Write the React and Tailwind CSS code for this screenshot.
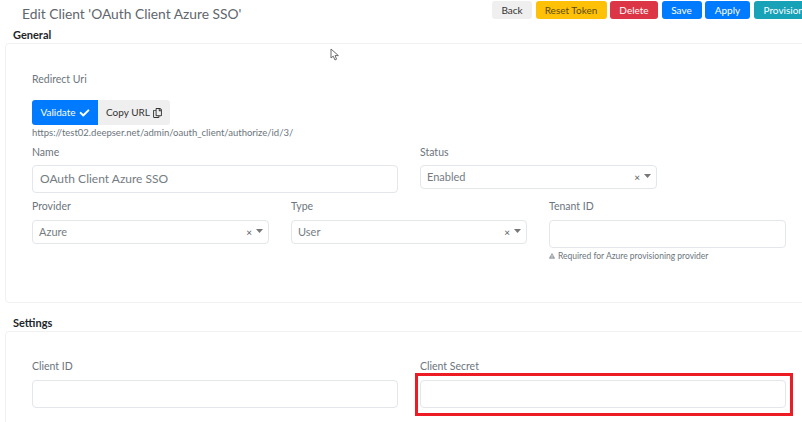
import { FaCheck, FaRegCopy, FaExclamationTriangle } from 'react-icons/fa'

const buttons = [
  { label: 'Back', className: 'w-[40px] bg-[#efefef] text-[#333333]' },
  { label: 'Reset Token', className: 'w-[71px] bg-[#ffc107] text-[#5c4a10]' },
  { label: 'Delete', className: 'w-[48px] bg-[#dc3545] text-white' },
  { label: 'Save', className: 'w-[40px] bg-[#007bff] text-white' },
  { label: 'Apply', className: 'w-[45px] bg-[#007bff] text-white' },
  { label: 'Provision', className: 'w-[60px] shrink-0 justify-start pl-[10px] bg-[#17a2b8] text-white' },
]

const Label = ({ children, className = '' }) => (
  <div className={`text-[10.5px] leading-[14px] text-[#6c757d] ${className}`}>{children}</div>
)

const TextInput = ({ value, className = '' }) => (
  <div className={`h-[28px] flex items-center px-[7px] bg-white border border-[#e3e6ea] rounded-[4px] text-[12px] text-[#757c83] ${className}`}>
    {value}
  </div>
)

const SelectBox = ({ value, width = 'w-[237px]' }) => (
  <div className={`${width} h-[24px] flex items-center pl-[6px] pr-[5px] bg-white border border-[#e3e6ea] rounded-[4px] text-[11px] text-[#757c83]`}>
    <span className="flex-1">{value}</span>
    <span className="text-[10px] leading-none text-[#555b61] mr-[4px]">×</span>
    <svg width="7" height="4" viewBox="0 0 7 4" className="mb-[2px]">
      <path d="M0 0h7L3.5 4z" fill="#777777" />
    </svg>
  </div>
)

const App = () => {
  return (
    <div className="relative w-[802px] h-[422px] overflow-hidden bg-white font-['Lato','Open_Sans',sans-serif]">
      <div className="flex items-start h-[28px] pt-[1px]">
        <h1 className="ml-[22px] mt-[3px] text-[13.8px] leading-[20px] font-normal text-[#5f666d]">
          Edit Client 'OAuth Client Azure SSO'
        </h1>
        <div className="absolute left-[492px] top-[1px] flex gap-[3.5px]">
          {buttons.map((b) => (
            <div key={b.label} className={`h-[18px] flex items-center justify-center rounded-[3px] text-[10px] whitespace-nowrap ${b.className}`}>
              {b.label}
            </div>
          ))}
        </div>
      </div>

      <div className="ml-[13px] text-[11px] leading-[14px] font-bold text-[#212529]">General</div>

      <section className="ml-[5px] mt-[1px] w-[820px] h-[260px] border border-[#f0f1f3] rounded-[4px] pl-[26px] pt-[28px]">
        <Label>Redirect Uri</Label>
        <div className="flex mt-[14px] h-[25px]">
          <div className="w-[66px] flex items-center justify-center gap-[3px] bg-[#007bff] text-white text-[10px] rounded-l-[3px]">
            Validate <FaCheck className="w-[11px] h-[10px]" />
          </div>
          <div className="w-[72px] flex items-center justify-center gap-[3px] bg-[#efefef] text-[#333333] text-[10px] rounded-r-[3px]">
            Copy URL <FaRegCopy className="w-[9px] h-[10px]" />
          </div>
        </div>
        <div className="mt-[1px] text-[9.5px] leading-[13px] text-[#6c757d]">
          https://test02.deepser.net/admin/oauth_client/authorize/id/3/
        </div>

        <div className="flex gap-[22px] mt-[6px]">
          <div className="w-[366px]">
            <Label>Name</Label>
            <TextInput value="OAuth Client Azure SSO" className="mt-[6px]" />
          </div>
          <div>
            <Label>Status</Label>
            <div className="mt-[6px]">
              <SelectBox value="Enabled" />
            </div>
          </div>
        </div>

        <div className="flex gap-[22px] mt-[6px]">
          <div>
            <Label>Provider</Label>
            <div className="mt-[7px]"><SelectBox value="Azure" /></div>
          </div>
          <div>
            <Label>Type</Label>
            <div className="mt-[7px]"><SelectBox value="User" width="w-[236px]" /></div>
          </div>
          <div className="w-[237px]">
            <Label>Tenant ID</Label>
            <TextInput className="mt-[7px]" />
            <div className="flex items-center gap-[3px] mt-[2px] text-[8.5px] leading-[12px] text-[#6c757d]">
              <FaExclamationTriangle className="w-[6px] h-[6px] text-[#9aa1a7]" />
              Required for Azure provisioning provider
            </div>
          </div>
        </div>
      </section>

      <div className="ml-[13px] mt-[13px] text-[11px] leading-[14px] font-bold text-[#212529]">Settings</div>

      <section className="ml-[5px] mt-[1px] w-[820px] h-[120px] border border-[#f0f1f3] rounded-[4px] pl-[26px] pt-[27px]">
        <div className="flex gap-[22px]">
          <div className="w-[366px]">
            <Label>Client ID</Label>
            <TextInput className="mt-[7px]" />
          </div>
          <div className="w-[366px]">
            <Label>Client Secret</Label>
            <TextInput className="mt-[7px]" />
          </div>
        </div>
      </section>

      {/* annotation box drawn over the screenshot */}
      <div className="absolute left-[415px] top-[373px] w-[378px] h-[43px] border-[3px] border-[#ed1c24]" />

      {/* mouse pointer */}
      <svg className="absolute left-[330px] top-[48px]" width="10" height="13" viewBox="0 0 10 13">
        <path d="M1 1v9l2.2-1.8L5 12l1.6-.8L5 7.6h3.4z" fill="#ffffff" stroke="#6b6b6b" strokeWidth="1" />
      </svg>
    </div>
  )
}

export default App
